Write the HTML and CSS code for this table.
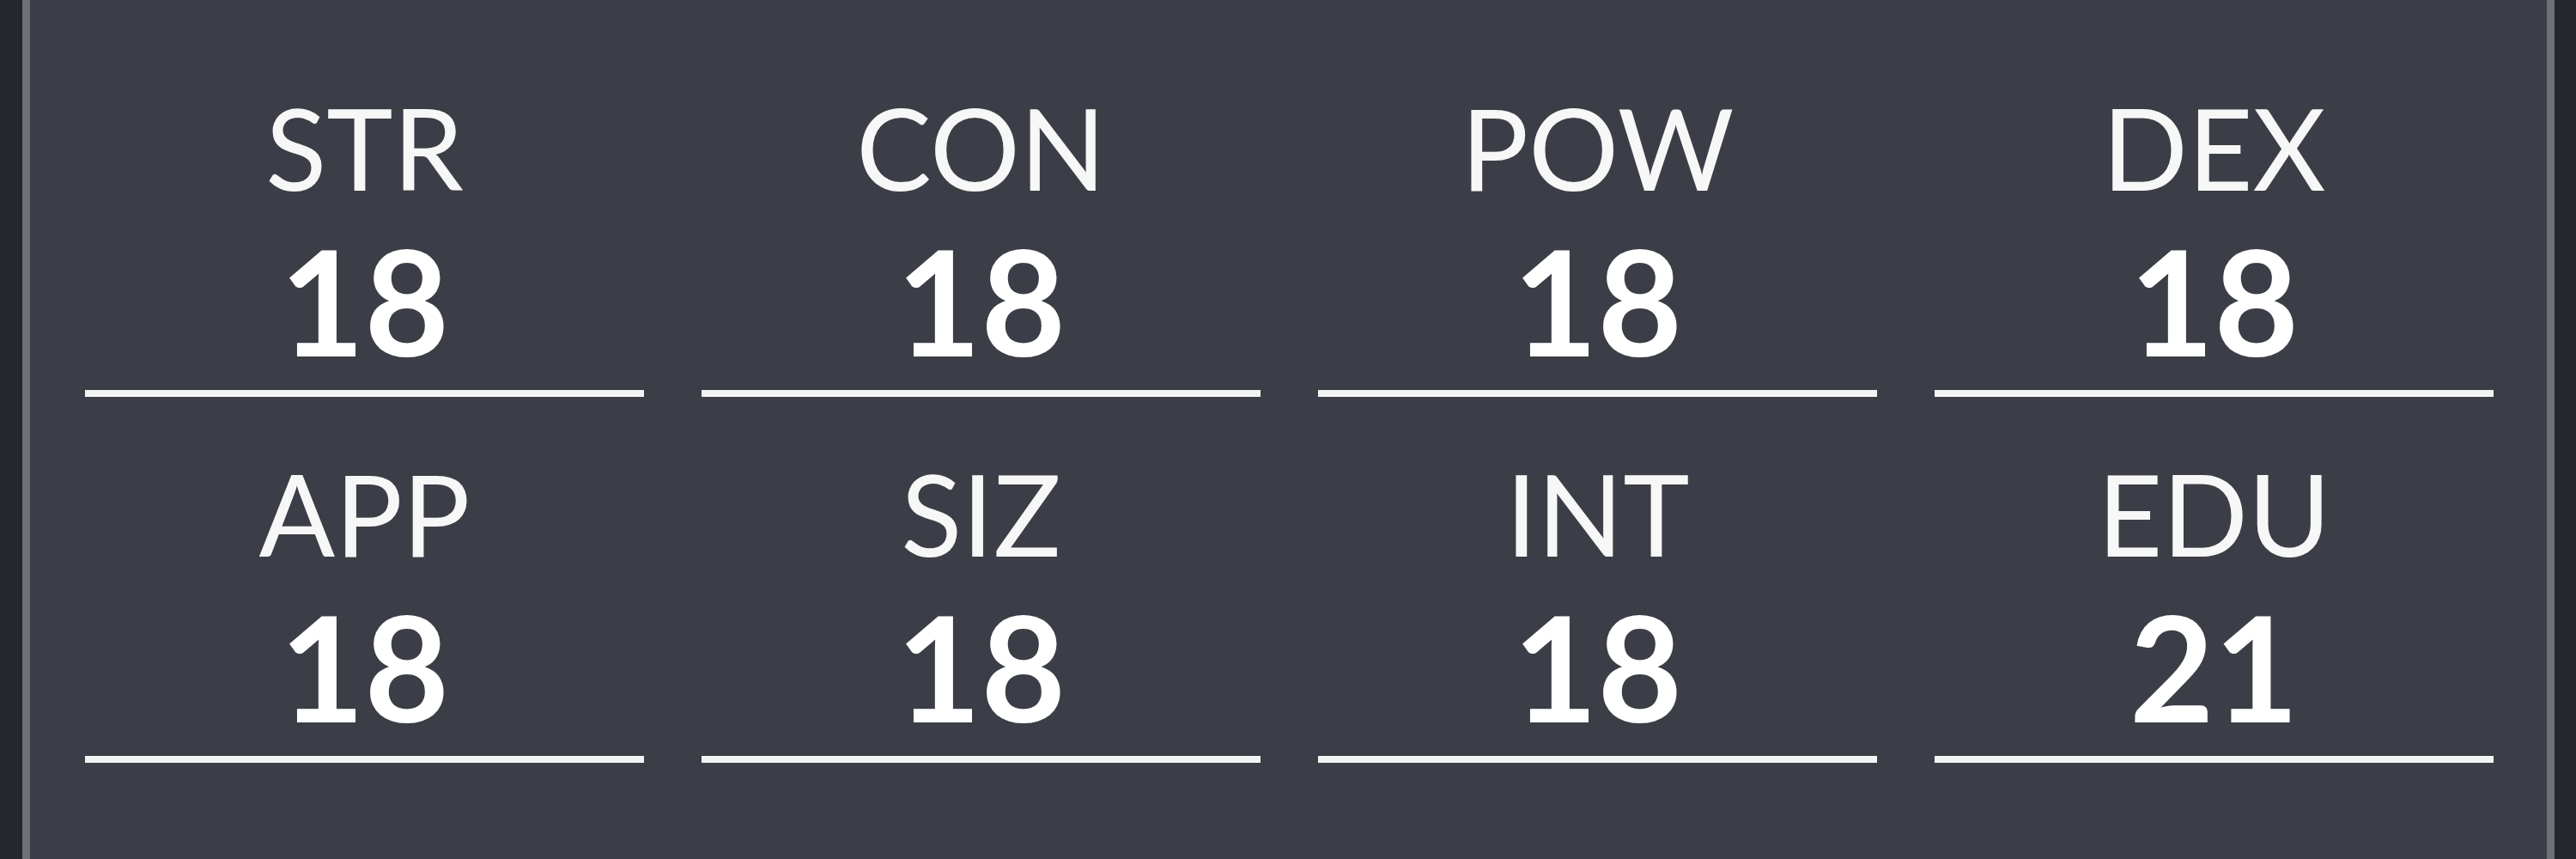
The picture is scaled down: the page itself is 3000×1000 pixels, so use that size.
FILE: index.html
```html
<!DOCTYPE html>
<html>
<head>
<meta charset="utf-8">
<link rel="stylesheet" href="styles.css">
</head>
<body>
<div class="panel">
  <div class="grid">
    <div class="stat"><div class="label">STR</div><div class="value">18</div></div>
    <div class="stat"><div class="label">CON</div><div class="value">18</div></div>
    <div class="stat"><div class="label">POW</div><div class="value">18</div></div>
    <div class="stat"><div class="label">DEX</div><div class="value">18</div></div>
    <div class="stat"><div class="label">APP</div><div class="value">18</div></div>
    <div class="stat"><div class="label">SIZ</div><div class="value">18</div></div>
    <div class="stat"><div class="label">INT</div><div class="value">18</div></div>
    <div class="stat"><div class="label">EDU</div><div class="value">21</div></div>
  </div>
</div>
</body>
</html>
```
FILE: styles.css
```css
html, body {
  margin: 0;
  padding: 0;
  background: #25272c;
}
body {
  width: 3000px;
  height: 1000px;
  overflow: hidden;
}
.panel {
  box-sizing: border-box;
  margin: 0 25px 0 26px;
  height: 1000px;
  background: #3b3e46;
  border-left: 9px solid #6f7177;
  border-right: 9px solid #6f7177;
  padding: 106px 62px 0 64px;
  font-family: Lato, "Noto Sans", sans-serif;
  color: #f7f7f7;
}
.grid {
  display: grid;
  grid-template-columns: repeat(4, 1fr);
  column-gap: 67px;
  row-gap: 70px;
}
.stat {
  display: flex;
  flex-direction: column;
  align-items: center;
  padding-bottom: 20px;
  border-bottom: 8px solid #f4f4f4;
}
.label {
  font-size: 131px;
  line-height: 131px;
  font-weight: 400;
  margin-bottom: 27px;
}
.value {
  font-size: 170px;
  line-height: 170px;
  font-weight: 700;
  color: #ffffff;
}
```
